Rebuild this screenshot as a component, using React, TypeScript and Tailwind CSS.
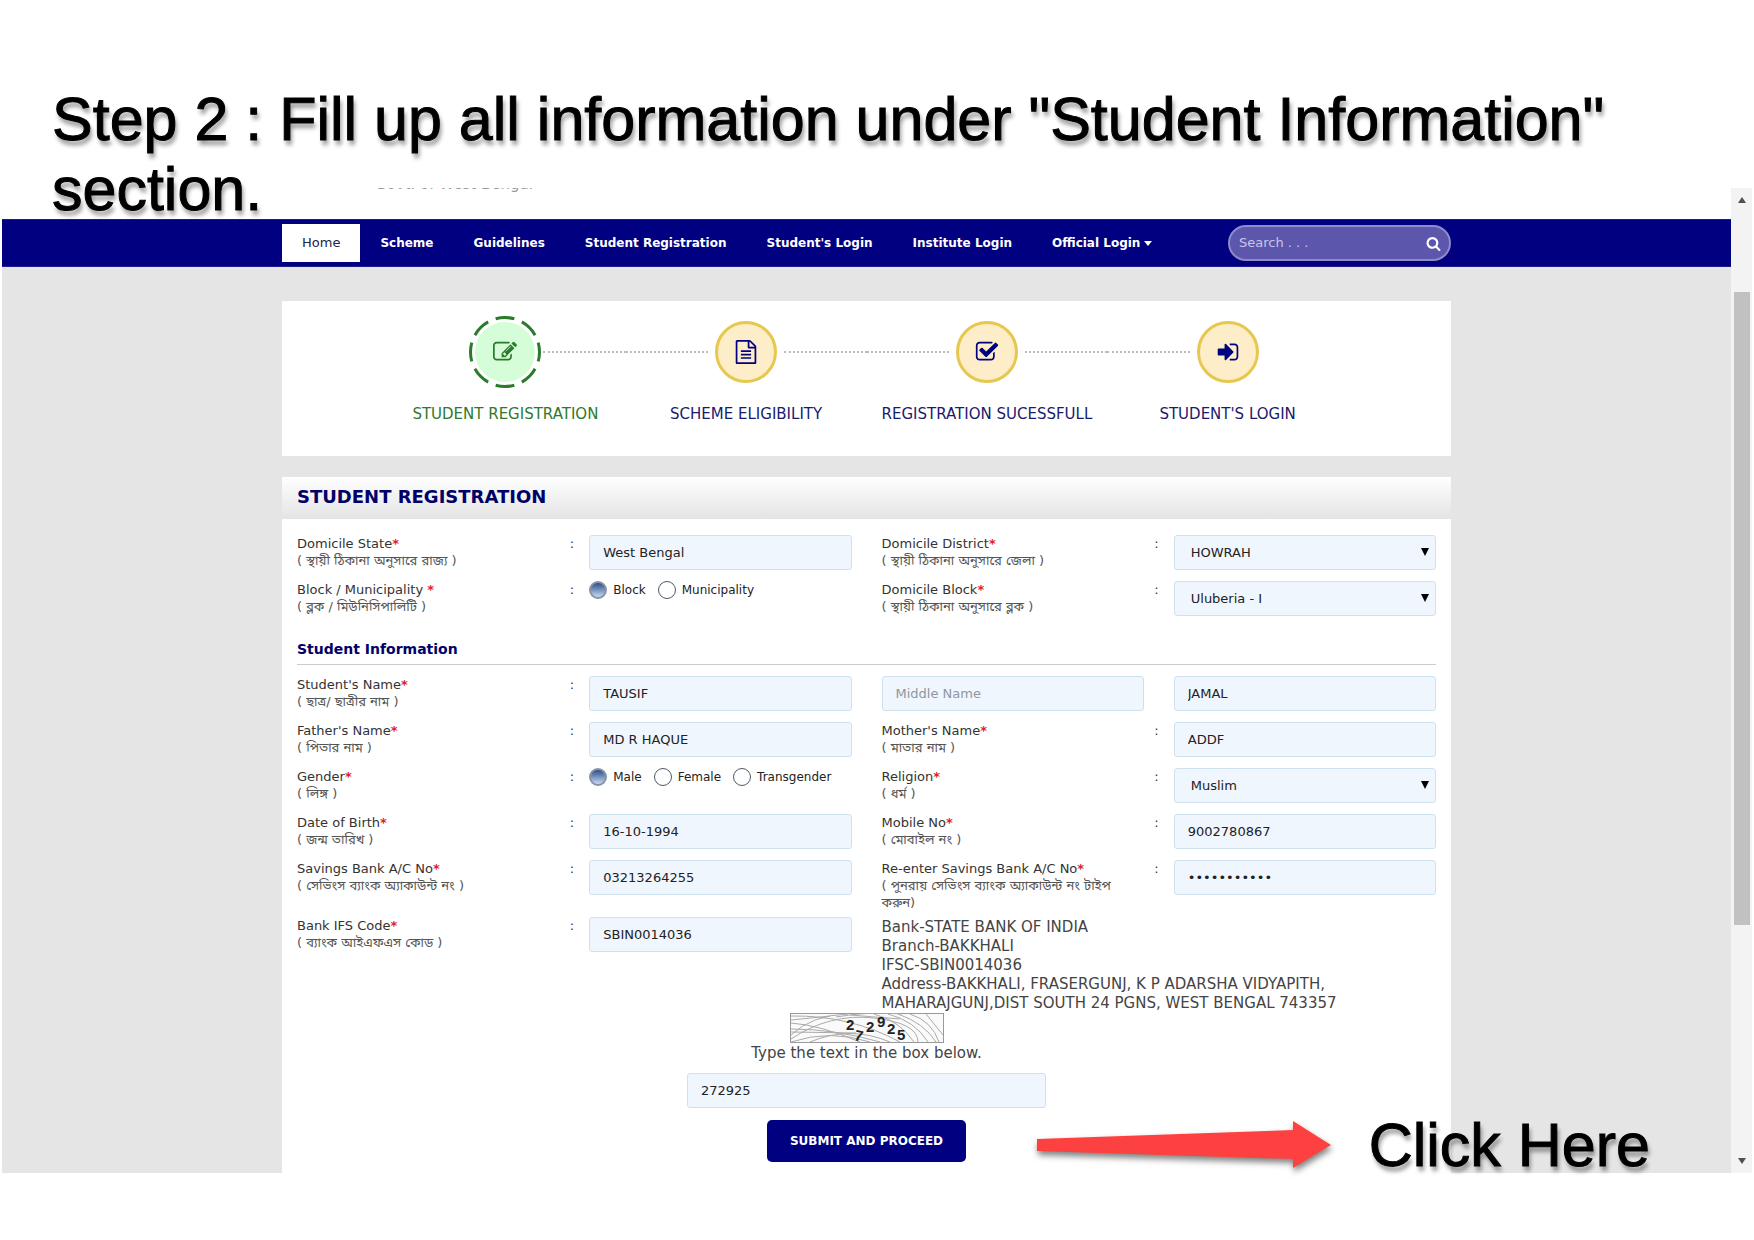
import { useState } from "react";
import type { ReactNode } from "react";

const icons = {
  edit: "M888 1184l116-116-152-152-116 116v56h96v96h56zm440-720q-16-16-33 1l-350 350q-17 17-1 33t33-1l350-350q17-17 1-33zm80 594v190q0 119-84.5 203.5t-203.5 84.5h-832q-119 0-203.5-84.5t-84.5-203.5v-832q0-119 84.5-203.5t203.5-84.5h832q63 0 117 25 15 7 18 23 3 17-9 29l-49 49q-14 14-32 8-23-6-45-6h-832q-66 0-113 47t-47 113v832q0 66 47 113t113 47h832q66 0 113-47t47-113v-126q0-13 9-22l64-64q15-15 35-7t20 29zm-96-738l288 288-672 672h-288v-288zm444 132l-92 92-288-288 92-92q28-28 68-28t68 28l152 152q28 28 28 68t-28 68z",
  file: "M1596 380q28 28 48 76t20 88v1152q0 40-28 68t-68 28h-1344q-40 0-68-28t-28-68v-1600q0-40 28-68t68-28h896q40 0 88 20t76 48zm-444-244v376h376q-10-29-22-41l-313-313q-12-12-41-22zm384 1528v-1024h-416q-40 0-68-28t-28-68v-416h-768v1536h1280zm-1024-864q0-14 9-23t23-9h704q14 0 23 9t9 23v64q0 14-9 23t-23 9h-704q-14 0-23-9t-9-23v-64zm736 224q14 0 23 9t9 23v64q0 14-9 23t-23 9h-704q-14 0-23-9t-9-23v-64q0-14 9-23t23-9h704zm0 256q14 0 23 9t9 23v64q0 14-9 23t-23 9h-704q-14 0-23-9t-9-23v-64q0-14 9-23t23-9h704z",
  check: "M1472 930v318q0 119-84.5 203.5t-203.5 84.5h-832q-119 0-203.5-84.5t-84.5-203.5v-832q0-119 84.5-203.5t203.5-84.5h832q63 0 117 25 15 7 18 23 3 17-9 29l-49 49q-10 10-23 10-3 0-9-2-23-6-45-6h-832q-66 0-113 47t-47 113v832q0 66 47 113t113 47h832q66 0 113-47t47-113v-254q0-13 9-22l64-64q10-10 23-10 6 0 12 3 20 8 20 29zm231-489l-814 814q-24 24-57 24t-57-24l-430-430q-24-24-24-57t24-57l110-110q24-24 57-24t57 24l263 263 647-647q24-24 57-24t57 24l110 110q24 24 24 57t-24 57z",
  signIn: "M1312 896q0 26-19 45l-544 544q-19 19-45 19t-45-19-19-45v-288h-448q-26 0-45-19t-19-45v-384q0-26 19-45t45-19h448v-288q0-26 19-45t45-19 45 19l544 544q19 19 19 45zm352-352v704q0 119-84.5 203.5t-203.5 84.5h-320q-13 0-22.5-9.5t-9.5-22.5q0-4-1-20t-.5-26.5 3-23.5 10-19.5 20.5-6.5h320q66 0 113-47t47-113v-704q0-66-47-113t-113-47h-312l-11.5-1-11.5-3-8-5.5-7-9-2-13.5q0-4-1-20t-.5-26.5 3-23.5 10-19.5 20.5-6.5h320q119 0 203.5 84.5t84.5 203.5z",
  search: "M1216 832q0-185-131.5-316.5t-316.5-131.5-316.5 131.5-131.5 316.5 131.5 316.5 316.5 131.5 316.5-131.5 131.5-316.5zm512 832q0 52-38 90t-90 38q-54 0-90-38l-343-342q-179 124-399 124-143 0-273.5-55.5t-225-150-150-225-55.5-273.5 55.5-273.5 150-225 225-150 273.5-55.5 273.5 55.5 225 150 150 225 55.5 273.5q0 220-124 399l343 343q37 37 37 90z",
};

function Icon({ name, className }: { name: keyof typeof icons; className: string }) {
  return (
    <svg viewBox="0 0 1792 1792" fill="currentColor" className={className} aria-hidden="true">
      <path d={icons[name]} />
    </svg>
  );
}

const navLinks = ["Scheme", "Guidelines", "Student Registration", "Student's Login", "Institute Login"];

function NavBar() {
  return (
    <nav className="bg-[#000080] border-y border-[#1c1c8c] text-xs text-white">
      <div className="max-w-[1169px] mx-auto py-1 flex items-center justify-between">
        <div className="flex items-center font-bold">
          <a href="#home" className="bg-white text-[13px] text-[#222244] font-normal px-5 h-[38px] flex items-center">
            Home
          </a>
          {navLinks.map((text) => (
            <a key={text} href="#" className="px-5 h-[38px] flex items-center">
              {text}
            </a>
          ))}
          <a href="#" className="px-5 h-[38px] flex items-center">
            Official Login
            <svg className="ml-1 w-2 h-2" viewBox="0 0 8 8" fill="currentColor" aria-hidden="true">
              <path d="M0 2h8L4 7z" />
            </svg>
          </a>
        </div>
        <form className="w-[223px] h-9 flex items-center bg-[#5c56ac] border-2 border-[#8f8bc8] rounded-full pl-[9px] pr-2">
          <input
            type="text"
            aria-label="Search"
            placeholder="Search . . ."
            className="min-w-0 flex-1 bg-transparent outline-none text-[13px] text-white placeholder:text-[#c9c6e8]"
          />
          <button type="button" aria-label="Search" className="cursor-pointer">
            <Icon name="search" className="w-[15px] h-[15px]" />
          </button>
        </form>
      </div>
    </nav>
  );
}

const steps: { icon: keyof typeof icons; text: string }[] = [
  { icon: "edit", text: "STUDENT REGISTRATION" },
  { icon: "file", text: "SCHEME ELIGIBILITY" },
  { icon: "check", text: "REGISTRATION SUCESSFULL" },
  { icon: "signIn", text: "STUDENT'S LOGIN" },
];

function Steps() {
  return (
    <ol className="bg-white px-[103px] pt-[13px] pb-8 grid grid-cols-4">
      {steps.map((step, i) => (
        <li key={step.text} className="flex flex-col items-center">
          <div className="w-full flex items-center">
            <span className={i > 0 ? "flex-1 border-t-2 border-dotted border-[#bdbdbd]" : "flex-1"} />
            <span className="w-[76px] h-[76px] flex items-center justify-center">
              {i === 0 ? (
                <span className="relative flex items-center justify-center text-[#2c7a2c]">
                  <svg viewBox="0 0 76 76" className="w-[76px] h-[76px]" fill="none" aria-hidden="true">
                    <circle cx="38" cy="38" r="30" fill="#d4fdd8" />
                    <circle
                      cx="38"
                      cy="38"
                      r="34.5"
                      stroke="currentColor"
                      strokeWidth="3"
                      pathLength="80"
                      strokeDasharray="7 3"
                      strokeDashoffset="3.5"
                    />
                  </svg>
                  <Icon name={step.icon} className="absolute w-6 h-6" />
                </span>
              ) : (
                <span className="w-[62px] h-[62px] rounded-full border-[3px] border-[#e6c84e] bg-[#fdedc8] text-[#000080] flex items-center justify-center">
                  <Icon name={step.icon} className="w-6 h-6" />
                </span>
              )}
            </span>
            <span className={i < 3 ? "flex-1 border-t-2 border-dotted border-[#bdbdbd]" : "flex-1"} />
          </div>
          <span
            className={
              i === 0
                ? "mt-[14px] leading-5 text-[15px] whitespace-nowrap text-[#2c7a2c]"
                : "mt-[14px] leading-5 text-[15px] whitespace-nowrap text-[#1a1a6e]"
            }
          >
            {step.text}
          </span>
        </li>
      ))}
    </ol>
  );
}

const boxClass =
  "block w-full h-[35px] bg-[#f0f6fe] border border-[#cde2ee] rounded-[3px] text-[13px] text-[#222] outline-none placeholder:text-[#8f979e]";

type LabelProps = {
  id: string;
  text: string;
  bangla: string;
};

function FieldLabel({ id, text, bangla }: LabelProps) {
  return (
    <div className="pl-[15px] flex justify-between">
      <label htmlFor={id} id={id + "-label"} className="leading-[17px] text-[13px] text-[#333] whitespace-pre-line">
        {text}
        <span className="text-[#e0202c] font-bold">*</span>
        <span className="block leading-[17px] text-[#555]">{bangla}</span>
      </label>
      <span className="text-[13px] leading-[17px] text-[#333]">:</span>
    </div>
  );
}

function Box({ children }: { children: ReactNode }) {
  return <div className="px-[15px]">{children}</div>;
}

type TextFieldProps = {
  id: string;
  value?: string;
  type?: string;
  placeholder?: string;
  label?: string;
};

function TextField({ id, value, type = "text", placeholder, label }: TextFieldProps) {
  return (
    <Box>
      <input
        id={id}
        type={type}
        defaultValue={value}
        placeholder={placeholder}
        aria-label={label}
        className={boxClass + " px-[13px]"}
      />
    </Box>
  );
}

function SelectField({ id, options }: { id: string; options: string[] }) {
  return (
    <Box>
      <div className="relative">
        <select id={id} className={boxClass + " appearance-none px-4"}>
          {options.map((option) => (
            <option key={option}>{option}</option>
          ))}
        </select>
        <svg
          className="absolute right-[7px] top-[13px] w-2 h-2 pointer-events-none"
          viewBox="0 0 8 8"
          aria-hidden="true"
        >
          <path d="M0 0h8L4 8z" />
        </svg>
      </div>
    </Box>
  );
}

function RadioField({ id, options }: { id: string; options: string[] }) {
  const [value, setValue] = useState(options[0]);

  return (
    <Box>
      <div role="radiogroup" aria-labelledby={id + "-label"} className="flex items-center gap-3 text-xs text-[#222]">
        {options.map((option, i) => (
          <label key={option} className="flex items-center gap-[6px]">
            <input
              id={i === 0 ? id : undefined}
              type="radio"
              name={id}
              checked={value === option}
              onChange={() => setValue(option)}
              className="appearance-none w-[18px] h-[18px] rounded-full border border-[#4b5a6b] bg-white checked:border-2 checked:border-[#8794a6] checked:bg-linear-to-b checked:from-[#2f4f8a] checked:to-[#c9dbf2]"
            />
            {option}
          </label>
        ))}
      </div>
    </Box>
  );
}

function Row({ children }: { children: ReactNode }) {
  return <div className="grid grid-cols-4 min-h-10 mb-[6px]">{children}</div>;
}

function Captcha() {
  return (
    <svg
      width="154"
      height="30"
      viewBox="0 0 154 30"
      role="img"
      aria-label="Captcha"
      fontFamily="Liberation Sans, sans-serif"
      fontSize="15"
      fontWeight="bold"
      fill="#222"
    >
      <rect x="0.5" y="0.5" width="153" height="29" fill="#fafafa" stroke="#999" />
      <g fill="none" stroke="#aaa" strokeWidth="1">
        <path d="M1 22Q22 2 58 1M1 10Q30 12 70 29M1 16Q45 16 90 29M1 29Q40 16 80 29M1 3Q60 2 110 29" />
        <path d="M1 26Q40 0 84 5T128 29M20 29Q60 12 100 29M46 4Q80 -2 112 1M1 7L40 3" />
        <path d="M98 1Q125 8 138 29M108 1Q134 10 146 29M84 1Q110 8 124 29M120 1Q142 8 149 29M136 1L153 22M60 2L110 6M1 19L66 20" />
      </g>
      <text x="56" y="17">2</text>
      <text x="65" y="28" transform="rotate(12 69 22)">7</text>
      <text x="76" y="19">2</text>
      <text x="87" y="14">9</text>
      <text x="97" y="21">2</text>
      <text x="107" y="27">5</text>
    </svg>
  );
}

function RegistrationForm() {
  return (
    <form className="bg-white mt-[21px] pb-[11px]">
      <h2 className="h-[42px] px-[15px] leading-10 text-lg font-bold text-[#000068] bg-linear-to-b from-white to-[#e4e4e4]">
        STUDENT REGISTRATION
      </h2>

      <div className="pt-4">
        <Row>
          <FieldLabel id="state" text="Domicile State" bangla="( স্থায়ী ঠিকানা অনুসারে রাজ্য )" />
          <TextField id="state" value="West Bengal" />
          <FieldLabel id="district" text="Domicile District" bangla="( স্থায়ী ঠিকানা অনুসারে জেলা )" />
          <SelectField id="district" options={["HOWRAH"]} />
        </Row>
        <Row>
          <FieldLabel id="area" text="Block / Municipality " bangla="( ব্লক / মিউনিসিপালিটি )" />
          <RadioField id="area" options={["Block", "Municipality"]} />
          <FieldLabel id="block" text="Domicile Block" bangla="( স্থায়ী ঠিকানা অনুসারে ব্লক )" />
          <SelectField id="block" options={["Uluberia - I"]} />
        </Row>
      </div>

      <h3 className="mx-[15px] mt-[18px] mb-[11px] pb-[5px] leading-5 text-sm font-bold text-[#000068] border-b border-[#ccc]">
        Student Information
      </h3>

      <Row>
        <FieldLabel id="first-name" text="Student's Name" bangla="( ছাত্র/ ছাত্রীর নাম )" />
        <TextField id="first-name" value="TAUSIF" />
        <TextField id="middle-name" placeholder="Middle Name" label="Middle Name" />
        <TextField id="last-name" value="JAMAL" label="Last Name" />
      </Row>
      <Row>
        <FieldLabel id="father" text="Father's Name" bangla="( পিতার নাম )" />
        <TextField id="father" value="MD R HAQUE" />
        <FieldLabel id="mother" text="Mother's Name" bangla="( মাতার নাম )" />
        <TextField id="mother" value="ADDF" />
      </Row>
      <Row>
        <FieldLabel id="gender" text="Gender" bangla="( লিঙ্গ )" />
        <RadioField id="gender" options={["Male", "Female", "Transgender"]} />
        <FieldLabel id="religion" text="Religion" bangla="( ধর্ম )" />
        <SelectField id="religion" options={["Muslim"]} />
      </Row>
      <Row>
        <FieldLabel id="dob" text="Date of Birth" bangla="( জন্ম তারিখ )" />
        <TextField id="dob" value="16-10-1994" />
        <FieldLabel id="mobile" text="Mobile No" bangla="( মোবাইল নং )" />
        <TextField id="mobile" value="9002780867" />
      </Row>
      <Row>
        <FieldLabel id="account" text="Savings Bank A/C No" bangla="( সেভিংস ব্যাংক অ্যাকাউন্ট নং )" />
        <TextField id="account" value="03213264255" />
        <FieldLabel
          id="account-again"
          text="Re-enter Savings Bank A/C No"
          bangla={"( পুনরায় সেভিংস ব্যাংক অ্যাকাউন্ট নং টাইপ\nকরুন)"}
        />
        <TextField id="account-again" type="password" value="03213264255" />
      </Row>
      <div className="grid grid-cols-4">
        <FieldLabel id="ifsc" text="Bank IFS Code" bangla="( ব্যাংক আইএফএস কোড )" />
        <TextField id="ifsc" value="SBIN0014036" />
        <p className="col-span-2 px-[15px] pt-px text-[15px] leading-[19px] text-[#444]">
          Bank-STATE BANK OF INDIA
          <br />
          Branch-BAKKHALI
          <br />
          IFSC-SBIN0014036
          <br />
          Address-BAKKHALI, FRASERGUNJ, K P ADARSHA VIDYAPITH,
          <br />
          MAHARAJGUNJ,DIST SOUTH 24 PGNS, WEST BENGAL 743357
        </p>
      </div>

      <div className="flex flex-col items-center">
        <Captcha />
        <label htmlFor="captcha" className="pt-px mb-[10px] text-[15px] leading-[19px] text-[#444]">
          Type the text in the box below.
        </label>
        <div className="w-[359px]">
          <input id="captcha" type="text" defaultValue="272925" className={boxClass + " px-[13px]"} />
        </div>
        <button
          type="button"
          className="mt-3 h-[42px] px-[23px] rounded-[5px] bg-[#000080] text-white text-xs font-bold cursor-pointer"
        >
          SUBMIT AND PROCEED
        </button>
      </div>
    </form>
  );
}

function ScrollBar() {
  return (
    <div className="w-[21px] bg-[#f3f3f3] flex flex-col items-center justify-between py-[9px]" aria-hidden="true">
      <svg className="w-2 h-[6px]" viewBox="0 0 8 6" fill="#505050">
        <path d="M0 6h8L4 0z" />
      </svg>
      <div className="w-4 flex-1 mt-[89px] mb-[233px] bg-[#c1c1c1]" />
      <svg className="w-2 h-[6px]" viewBox="0 0 8 6" fill="#505050">
        <path d="M0 0h8L4 6z" />
      </svg>
    </div>
  );
}

export default function App() {
  return (
    <div className="relative min-h-screen bg-white pt-[188px] font-['DejaVu_Sans','Noto_Sans_Bengali',sans-serif]">
      <h1 className="absolute z-10 top-[84px] left-[52px] right-[100px] font-['Liberation_Sans',sans-serif] text-[61px] leading-[70px] text-black [-webkit-text-stroke:1px_black] [text-shadow:2px_5px_4px_rgba(0,0,0,0.4)]">
        Step 2 : Fill up all information under "Student Information" section.
      </h1>

      <div className="relative mx-[2px] flex">
        <main className="flex-1 bg-[#e5e5e5]">
          <div className="bg-white h-[31px]">
            {/* only the foot of the site header is scrolled into view */}
            <div className="max-w-[1169px] mx-auto h-[5px] overflow-hidden flex items-end">
              <span className="ml-[93px] text-[15px] leading-[18px] text-[#999]">Govt. of West Bengal</span>
            </div>
          </div>
          <NavBar />
          <div className="max-w-[1169px] mx-auto pt-[34px]">
            <Steps />
            <RegistrationForm />
          </div>
        </main>
        <ScrollBar />

        <div className="absolute bottom-0 right-[102px] flex items-center">
          <svg
            className="w-[294px] h-[48px] overflow-visible drop-shadow-[1px_4px_3px_rgba(0,0,0,0.5)]"
            viewBox="0 0 294 48"
            aria-hidden="true"
          >
            <path d="M0 18L256 9V0L294 24L256 47V38L0 30Z" fill="#fd4141" />
          </svg>
          <span className="ml-[38px] font-['Liberation_Sans',sans-serif] text-[61px] leading-[56px] text-black [-webkit-text-stroke:1px_black] [text-shadow:2px_5px_4px_rgba(0,0,0,0.4)]">
            Click Here
          </span>
        </div>
      </div>
    </div>
  );
}
